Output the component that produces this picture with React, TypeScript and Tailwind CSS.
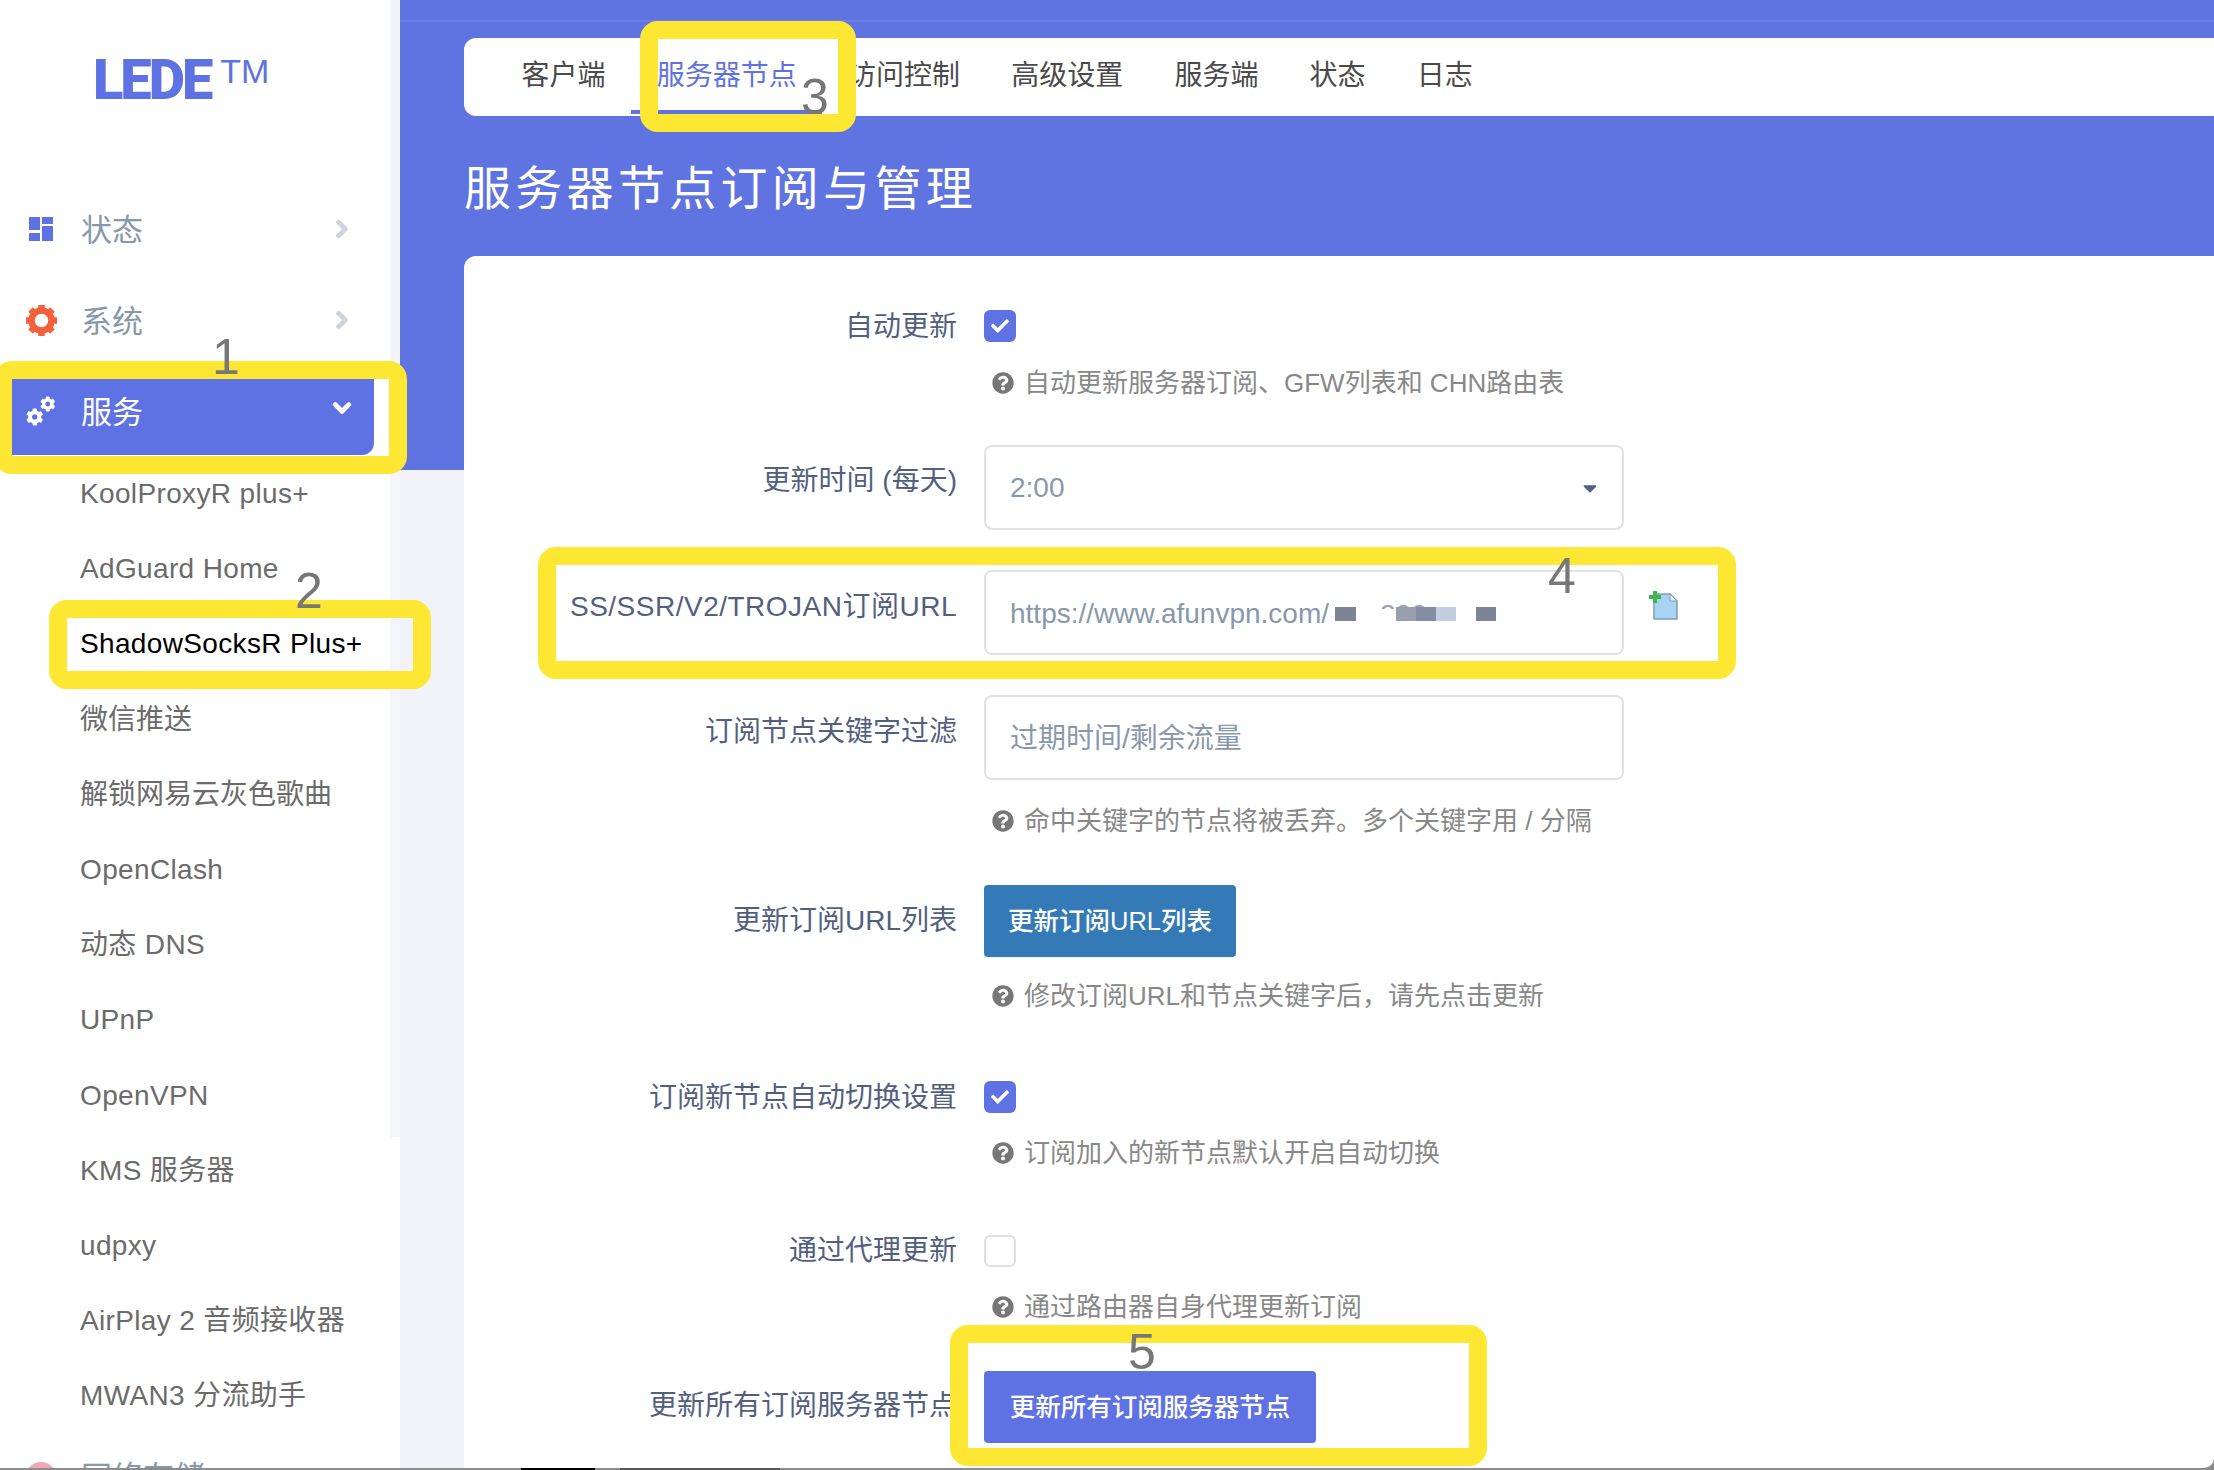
import type { ReactNode } from "react"
import { FaCaretDown, FaCheck, FaChevronDown, FaChevronRight, FaCog, FaQuestionCircle } from "react-icons/fa"

const font = "font-['Liberation_Sans','Noto_Sans_CJK_SC',sans-serif]"

const subItems = [
  "KoolProxyR plus+",
  "AdGuard Home",
  "ShadowSocksR Plus+",
  "微信推送",
  "解锁网易云灰色歌曲",
  "OpenClash",
  "动态 DNS",
  "UPnP",
  "OpenVPN",
  "KMS 服务器",
  "udpxy",
  "AirPlay 2 音频接收器",
  "MWAN3 分流助手",
]

const tabs = ["客户端", "服务器节点", "访问控制", "高级设置", "服务端", "状态", "日志"]

const TileIcon = () => (
  <svg width="24" height="24" viewBox="0 0 24 24" className="text-[#5e72e4]" fill="currentColor">
    <rect x="0" y="0" width="11" height="13" />
    <rect x="13" y="0" width="11" height="7" />
    <rect x="0" y="16" width="11" height="8" />
    <rect x="13" y="9" width="11" height="15" />
  </svg>
)

const GearIcon = () => (
  <svg width="33" height="33" viewBox="0 0 33 33" fill="none" stroke="#f5603c">
    <circle cx="16.5" cy="16.5" r="10" strokeWidth="6.5" />
    {[0, 45, 90, 135, 180, 225, 270, 315].map((a) => (
      <path key={a} d="M16.5 1v5" strokeWidth="6.5" transform={`rotate(${a} 16.5 16.5)`} />
    ))}
  </svg>
)

const AddIcon = () => (
  <svg width="32" height="32" viewBox="0 0 32 32">
    <path d="M7 4h16l7 7v18H7z" fill="#a9d3f2" stroke="#7f9db5" strokeWidth="1.5" />
    <path d="M23 4v7h7z" fill="#e8f3fb" stroke="#7f9db5" strokeWidth="1" />
    <path d="M6 1h4v4h4v4h-4v4H6V9H2V5h4z" fill="#3fb54a" />
  </svg>
)

const Help = ({ children, className }: { children: ReactNode; className: string }) => (
  <div className={`flex items-center h-9 text-[26px] text-[#888888] ${className}`}>
    <FaQuestionCircle className="ml-2 mr-[10px] text-[22px] text-[#777777]" />
    <span>{children}</span>
  </div>
)

const Row = ({ label, top, className, children }: { label: string; top: string; className?: string; children: ReactNode }) => (
  <div className={`flex items-start ${className ?? ""}`}>
    <div className={`w-[493px] shrink-0 h-9 leading-9 text-right text-[28px] text-[#525f7f] whitespace-nowrap ${top}`}>
      {label}
    </div>
    <div className="ml-[27px]">{children}</div>
  </div>
)

const Check = ({ on }: { on?: boolean }) =>
  on ? (
    <div className="w-8 h-8 rounded-md bg-[#5e72e4] flex items-center justify-center text-white text-[18px]">
      <FaCheck />
    </div>
  ) : (
    <div className="w-8 h-8 rounded-md border-2 border-[#dee2e6] bg-white" />
  )

const Field = ({ children, className }: { children: ReactNode; className?: string }) => (
  <div className={`w-[640px] h-[85px] rounded-lg border-2 border-[#dee2e6] bg-white flex items-center pl-[24px] pr-4 text-[28px] text-[#8898aa] whitespace-nowrap ${className ?? ""}`}>
    {children}
  </div>
)

const Marker = ({ className }: { className: string }) => (
  <div className={`absolute border-[18px] border-[#fde732] rounded-[18px] ${className}`} />
)

const Num = ({ children, className }: { children: ReactNode; className: string }) => (
  <div className={`absolute text-[50px] leading-none text-[#777777] ${className}`}>{children}</div>
)

export default function App() {
  return (
    <div className={`relative w-[2214px] h-[1470px] overflow-hidden flex bg-white ${font}`}>
      {/* sidebar */}
      <aside className="w-[400px] shrink-0 flex bg-white">
        <div className="w-[390px]">
          <div className="h-[185px] pt-[52px] pl-[93px] flex items-start">
            <span className="font-['Roboto',sans-serif] font-black text-[56px] leading-[56px] tracking-[-3px] text-[#5e72e4]">LEDE</span>
            <span className="ml-[10px] mt-[2px] text-[34px] leading-[34px] text-[#5e72e4]">TM</span>
          </div>

          <div className="h-[88px] mb-[3px] flex items-center text-[31px] text-[#8898aa]">
            <div className="w-[81px] flex justify-center pl-[1px]"><TileIcon /></div>
            <span className="pt-[5px]">状态</span>
            <FaChevronRight className="ml-auto mr-[38px] text-[20px] text-[#ced4da] stroke-[40px]" />
          </div>
          <div className="h-[88px] mb-[3px] flex items-center text-[31px] text-[#8898aa]">
            <div className="w-[81px] flex justify-center pl-[1px]"><GearIcon /></div>
            <span className="pt-[4px]">系统</span>
            <FaChevronRight className="ml-auto mr-[38px] text-[20px] text-[#ced4da] stroke-[40px]" />
          </div>
          <div className="h-[88px] mb-[1.5px] w-[374px] rounded-r-xl bg-[#5e72e4] flex items-center text-[31px] text-white">
            <div className="w-[81px] flex justify-center">
              <div className="w-[30px] h-[30px] flex">
                <FaCog className="text-[18px] self-end" />
                <FaCog className="text-[16px] self-start -ml-[3px]" />
              </div>
            </div>
            <span className="pt-[4px]">服务</span>
            <FaChevronDown className="ml-auto mr-[22px] -mt-[6px] text-[20px] stroke-[40px]" />
          </div>

          {subItems.map((item) => (
            <div
              key={item}
              className={`h-[75.2px] pl-[80px] flex items-center text-[28px] whitespace-nowrap ${
                item.startsWith("Shadow") ? "text-black" : "text-[#6b6b6b]"
              } ${/[A-Za-z]/.test(item) ? "tracking-[0.35px]" : ""}`}
            >
              {item}
            </div>
          ))}

          <div className="h-[88px] flex items-center text-[31px] text-[#8898aa]">
            <div className="w-[81px] flex justify-center"><div className="w-8 h-8 rounded-full bg-[#f2a7b5]" /></div>
            <span>网络存储</span>
          </div>
        </div>
        <div className="w-[10px] h-[1137px] bg-[#f4f5fb]" />
      </aside>

      {/* main */}
      <main className="flex-1 min-w-0 bg-[#f1f3f9]">
        <div className="h-[470px] bg-[#5f74e0] pt-[38px] pl-[64px]">
          <div className="h-[78px] rounded-l-xl bg-white flex pl-[32px] text-[28px] text-[#4a4a4a]">
            {tabs.map((tab, i) => (
              <div
                key={tab}
                className={`h-[76px] px-[25.6px] flex items-center whitespace-nowrap ${
                  i === 1 ? "text-[#5e72e4] border-b-4 border-[#5e72e4] pt-[4px]" : ""
                }`}
              >
                {tab}
              </div>
            ))}
          </div>
          <h1 className="mt-[43px] h-[60px] leading-[60px] text-[47px] tracking-[4.3px] text-white font-normal">
            服务器节点订阅与管理
          </h1>
        </div>

        <div className="-mt-[214px] ml-[64px] h-[1300px] rounded-tl-xl bg-white pt-[54px]">
          <Row label="自动更新" top="-mt-[1px] -mb-[3px]">
            <Check on />
          </Row>
          <Help className="mt-[23px] ml-[520px]">自动更新服务器订阅、GFW列表和 CHN路由表</Help>

          <Row label="更新时间 (每天)" top="mt-[18px]" className="mt-[44px]">
            <Field>
              <span>2:00</span>
              <FaCaretDown className="ml-auto mr-[5px] text-[22px] text-[#525f7f]" />
            </Field>
          </Row>

          <Row label="SS/SSR/V2/TROJAN订阅URL" top="mt-[19px] tracking-[0.5px]" className="mt-[40px]">
            <div className="flex items-start">
              <Field className="pt-[3px]">
                <span>https://www.afunvpn.com/</span>
                <span className="ml-[6px] w-[21px] h-[14px] bg-[#7d8595]" />
                <span className="ml-[24px] w-[47px] h-[8px] -mt-[18px] overflow-hidden leading-[28px] text-[#9aa3b5]">200</span>
                <span className="-ml-[31px] w-[20px] h-[14px] bg-[#999fae]" />
                <span className="w-[20px] h-[14px] bg-[#858da3]" />
                <span className="w-[20px] h-[14px] bg-[#c4cce0]" />
                <span className="ml-[20px] w-[20px] h-[14px] bg-[#7d8595]" />
              </Field>
              <div className="ml-[23px] mt-[20px]"><AddIcon /></div>
            </div>
          </Row>

          <Row label="订阅节点关键字过滤" top="mt-[19px]" className="mt-[40px]">
            <Field className="pt-[3px]">过期时间/剩余流量</Field>
          </Row>
          <Help className="mt-[23px] ml-[520px]">命中关键字的节点将被丢弃。多个关键字用 / 分隔</Help>

          <Row label="更新订阅URL列表" top="mt-[18px]" className="mt-[46px]">
            <button className="w-[252px] h-[72px] rounded bg-[#337ab7] text-white text-[25.5px] font-medium">更新订阅URL列表</button>
          </Row>
          <Help className="mt-[21px] ml-[520px]">修改订阅URL和节点关键字后，请先点击更新</Help>

          <Row label="订阅新节点自动切换设置" top="-mt-[1px] -mb-[3px]" className="mt-[67px]">
            <Check on />
          </Row>
          <Help className="mt-[22px] ml-[520px]">订阅加入的新节点默认开启自动切换</Help>

          <Row label="通过代理更新" top="-mt-[2px] -mb-[2px]" className="mt-[64px]">
            <Check />
          </Row>
          <Help className="mt-[22px] ml-[520px]">通过路由器自身代理更新订阅</Help>

          <Row label="更新所有订阅服务器节点" top="mt-[17px]" className="mt-[46px]">
            <button className="w-[332px] h-[72px] rounded bg-[#5e72e4] text-white text-[25.5px] font-medium">更新所有订阅服务器节点</button>
          </Row>
        </div>
      </main>

      {/* top line of the blue header */}
      <div className="absolute left-[400px] right-0 top-[20px] h-[2px] bg-[#6d80e8]" />

      {/* annotation boxes */}
      <Marker className="-left-[6px] top-[361px] w-[413px] h-[113px]" />
      <Marker className="left-[49px] top-[600px] w-[382px] h-[89px]" />
      <Marker className="left-[640px] top-[21px] w-[216px] h-[111px]" />
      <Marker className="left-[538px] top-[547px] w-[1198px] h-[132px]" />
      <Marker className="left-[950px] top-[1325px] w-[537px] h-[141px]" />

      <Num className="left-[212px] top-[332px]">1</Num>
      <Num className="left-[295px] top-[566px]">2</Num>
      <Num className="left-[801px] top-[72px]">3</Num>
      <Num className="left-[1548px] top-[551px]">4</Num>
      <Num className="left-[1128px] top-[1327px]">5</Num>

      {/* screenshot edge */}
      <div className="absolute left-0 right-0 bottom-0 h-[2px] flex bg-[#8c8c8c]">
        <div className="ml-[521px] w-[74px] bg-black" />
        <div className="ml-[25px] w-[160px] bg-[#555555]" />
      </div>
      <div className="absolute right-0 bottom-[2px] w-3 h-3 bg-[#8c8c8c]">
        <div className="w-3 h-3 bg-white rounded-br-[10px]" />
      </div>
    </div>
  )
}
